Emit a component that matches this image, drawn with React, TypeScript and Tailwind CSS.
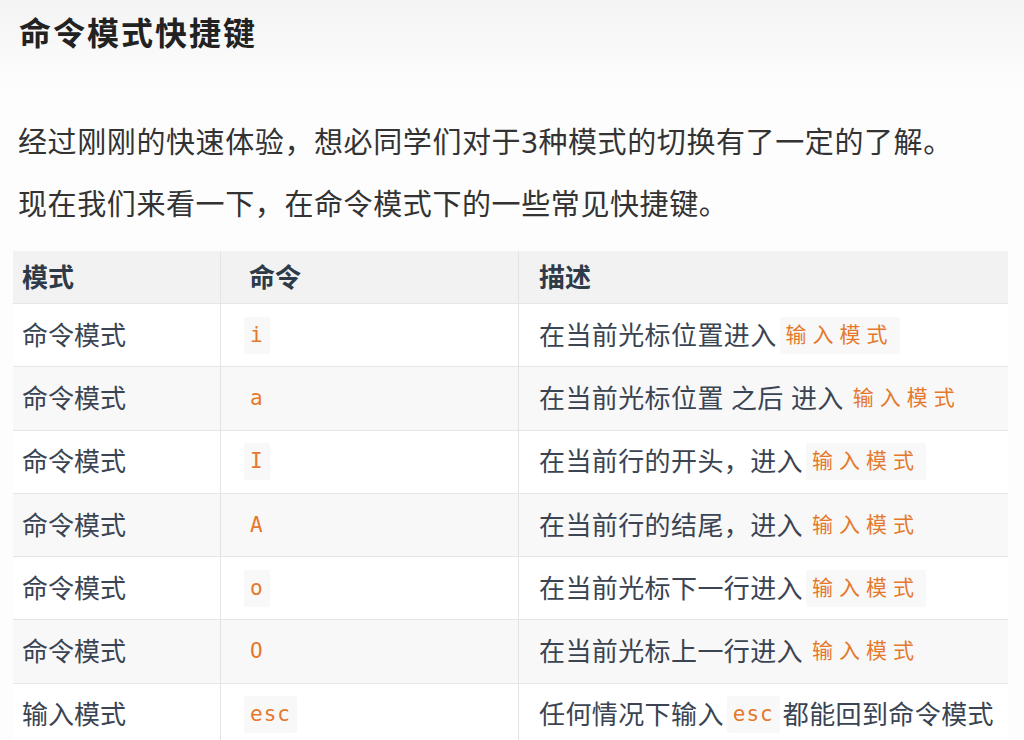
const ROWS: { mode: string; cmd: string; desc: React.ReactNode }[] = [
  { mode: "命令模式", cmd: "i", desc: <>在当前光标位置进入<Code cjk>输入模式</Code></> },
  { mode: "命令模式", cmd: "a", desc: <>在当前光标位置 之后 进入<Code cjk>输入模式</Code></> },
  { mode: "命令模式", cmd: "I", desc: <>在当前行的开头，进入<Code cjk>输入模式</Code></> },
  { mode: "命令模式", cmd: "A", desc: <>在当前行的结尾，进入<Code cjk>输入模式</Code></> },
  { mode: "命令模式", cmd: "o", desc: <>在当前光标下一行进入<Code cjk>输入模式</Code></> },
  { mode: "命令模式", cmd: "O", desc: <>在当前光标上一行进入<Code cjk>输入模式</Code></> },
  { mode: "输入模式", cmd: "esc", desc: <>任何情况下输入<Code>esc</Code>都能回到命令模式</> },
];

function Code({ children, cjk = false }: { children: React.ReactNode; cjk?: boolean }) {
  return (
    <code
      className={
        "mx-[3px] inline-block rounded-[2px] bg-[#f8f8f8] px-[6px] py-[5px] align-middle leading-[27px] text-[#e5782c] [font-family:'DejaVu_Sans_Mono','Noto_Sans_CJK_SC',monospace] " +
        (cjk ? "text-[21px] tracking-[6px]" : "text-[21px] tracking-[1px]")
      }
    >
      {children}
    </code>
  );
}

export default function App() {
  return (
    <div className="min-h-[740px] w-full overflow-hidden bg-gradient-to-b from-[#f4f4f4] via-[#fdfdfd] via-[12%] to-[#fdfdfd] text-[#333] [font-family:'Noto_Sans','Noto_Sans_CJK_SC',sans-serif]">
      <h1 className="pl-[19px] pt-[13px] text-[32px] font-bold leading-[40px] tracking-[2px] text-[#222]">
        命令模式快捷键
      </h1>

      <div className="mt-[58px] pl-[18px] text-[29px] leading-[62px] tracking-[0.6px] text-[#333]">
        <p>经过刚刚的快速体验，想必同学们对于3种模式的切换有了一定的了解。</p>
        <p>现在我们来看一下，在命令模式下的一些常见快捷键。</p>
      </div>

      <div className="ml-[13px] mt-[16px] w-[995px] text-[26px] text-[#3a4452]">
        <div className="grid h-[52px] grid-cols-[207px_298px_490px] items-center bg-[#f2f2f2] font-bold text-[#2e3a48]">
          <div className="pl-[9px]">模式</div>
          <div className="flex h-full items-center border-l border-[#e3e3e3] pl-[28px]">命令</div>
          <div className="flex h-full items-center border-l border-[#e3e3e3] pl-[20px]">描述</div>
        </div>
        {ROWS.map((row, i) => (
          <div
            key={i}
            className={
              "grid h-[63.3px] grid-cols-[207px_298px_490px] items-center border-t border-[#e6e6e6] " +
              (i % 2 === 1 ? "bg-[#f8f8f8]" : "bg-white")
            }
          >
            <div className="pl-[9px]">{row.mode}</div>
            <div className="flex h-full items-center border-l border-[#e3e3e3] pl-[20px]">
              <Code>{row.cmd}</Code>
            </div>
            <div className="flex h-full items-center whitespace-nowrap border-l border-[#e3e3e3] pl-[20px] tracking-[0.4px]">
              {row.desc}
            </div>
          </div>
        ))}
      </div>
    </div>
  );
}
